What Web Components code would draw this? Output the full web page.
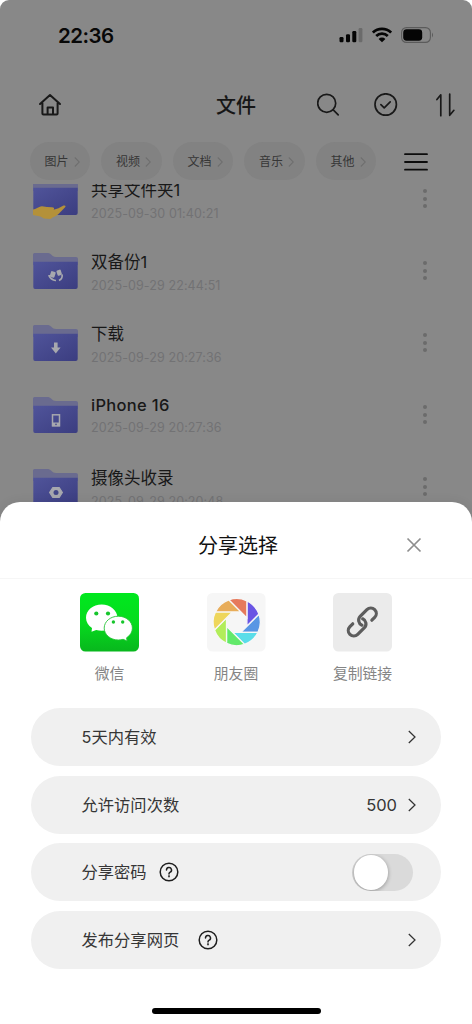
<!DOCTYPE html>
<html lang="zh-CN">
<head>
<meta charset="utf-8">
<meta name="viewport" content="width=device-width">
<title>文件</title>
<style>
body{margin:0;background:#fff;font-family:Inter,"Noto Sans CJK SC",sans-serif}
</style>
</head>
<body>
<share-screen></share-screen>
<script>
const define=(name,html)=>customElements.define(name,class extends HTMLElement{
  connectedCallback(){
    if(this.shadowRoot)return;
    const t=document.createElement('template');
    t.innerHTML=typeof html==='function'?html(this):html;
    this.attachShadow({mode:'open'}).append(t.content.cloneNode(true));
  }
});

define('status-bar',`<style>
:host{display:flex;justify-content:space-between;align-items:center;height:70px;padding:0 38.5px 0 58px;color:#080808}
b{font-size:20.5px;font-weight:600;line-height:24px;letter-spacing:-.5px;padding-top:1px}
.r{display:flex;align-items:center;gap:9px}
svg{display:block}
</style><b>22:36</b><div class="r">
<svg width="24" height="16" viewBox="0 0 24 16" fill="#050505"><rect x="0.5" y="10" width="4" height="5.2" rx="1.2"/><rect x="7" y="7.2" width="4" height="8" rx="1.2"/><rect x="13.3" y="4" width="4" height="11.2" rx="1.2"/><rect x="19.6" y="1" width="3.8" height="14.2" rx="1.2" fill="#6b6b6b"/></svg>
<svg width="20" height="16" viewBox="0 0 20 16" fill="none" stroke="#050505" stroke-width="2.7"><path d="M.9 5.6a13 13 0 0 1 18.2 0M4.2 9a8.3 8.3 0 0 1 11.6 0"/><path d="M10 15.2 6.6 11.9a4.9 4.9 0 0 1 6.8 0z" fill="#050505" stroke="none"/></svg>
<svg width="33" height="16" viewBox="0 0 33 16"><rect x=".6" y=".6" width="28.8" height="14.8" rx="4.8" fill="none" stroke="#5b5b5b" stroke-width="1.1"/><rect x="2.2" y="2.3" width="19" height="11.4" rx="3.4" fill="#050505"/><path d="M31 5.5q2 2.5 0 5z" fill="#5b5b5b"/></svg>
</div>`);

define('nav-bar',`<style>
:host{display:grid;grid-template-columns:1fr auto 1fr;align-items:center;height:70px;padding:0 38px 0 38px;color:#161616}
h1{margin:0;font-size:20px;font-weight:500;line-height:24px;padding-top:2px}
.a{display:flex;justify-content:flex-end;gap:34px;margin-right:-22px}
.a svg:first-child{margin-right:-1px}
svg{display:block;fill:none;stroke:#191919;stroke-width:1.7;stroke-linecap:round;stroke-linejoin:round;flex:none}
.h{stroke-width:2}
</style>
<svg class="h" width="24" height="24" viewBox="0 0 24 24"><path d="M2 11 12 2l10 9M4.4 9.8V20.6q0 1 1 1H18.6q1 0 1-1V9.8M9.6 21V14.5h5.4v6.5"/></svg>
<h1>文件</h1>
<div class="a">
<svg width="24" height="24" viewBox="0 0 24 24"><circle cx="9.7" cy="10.3" r="9"/><path d="m16.2 16.9 5 5"/></svg>
<svg width="24" height="24" viewBox="0 0 24 24"><circle cx="11.7" cy="11.5" r="10.7"/><path d="m6.9 11.7 3.3 3.200 6-6"/></svg>
<svg width="24" height="24" viewBox="0 0 24 24"><path d="M4.900 6.500 8.800 1.800V22.700M17.700 1V22.300l4.200-5"/></svg>
</div>`);

define('filter-chip',`<style>
:host{display:flex;align-items:center;gap:5px;box-sizing:border-box;width:60.5px;height:38px;padding:1px 0 0 15px;border-radius:19px;background:#828282;color:#363636;font-size:12px;line-height:17px}
svg{fill:none;stroke:#6f6f6f;stroke-width:1.1}
</style><span><slot></slot></span><svg width="6" height="10" viewBox="0 0 6 10"><path d="m.8.5 4.500 4.500-4.500 4.500"/></svg>`);

define('filter-bar',`<style>
:host{display:flex;align-items:center;padding:0 44px 0 29.500px;height:42px;justify-content:space-between;box-sizing:border-box}
.c{display:flex;gap:11px}
svg{display:block;margin-top:1px}
</style><div class="c"><filter-chip>图片</filter-chip><filter-chip>视频</filter-chip><filter-chip>文档</filter-chip><filter-chip>音乐</filter-chip><filter-chip>其他</filter-chip></div>
<svg width="24" height="20" viewBox="0 0 24 20" stroke="#0c0c0c" stroke-width="1.8" stroke-linecap="round"><path d="M1 2.200h22M1 10h22M1 17.700h22"/></svg>`);

const marks={
 share:'<path d="M0 28.500C3 28.500 5 25.800 9 25.300l5 .7 5 .3c2 0 2.800 1.400 1.500 2.500l5-1.600 5-2.600c2-.6 2.600.4 1.600 1.600L26.500 32c-2 2.400-4 3.200-6.500 4.200L17.500 38 11 37.500 7.500 35.500 0 34z" fill="#b4913a"/>',
 sync:'<g fill="none" stroke="#a7a8ae" stroke-width="1.700"><path d="M16 22q.300 3 4 4.800 1.500.8 3 .7M26 27.500q4-2 3-6"/></g><g fill="#a7a8ae"><rect x="17.500" y="18.500" width="4.800" height="6" rx="1" transform="rotate(18 20 21)"/><rect x="24" y="17" width="4.500" height="5.500" rx="1" transform="rotate(-18 26 20)"/></g>',
 down:'<path d="M21 17.500h3.600v5h3l-4.800 6-4.800-6h3z" fill="#a7a8ae"/>',
 phone:'<rect x="19.500" y="17.800" width="7" height="11" fill="none" stroke="#a7a8ae" stroke-width="1.500"/><path d="M19 25.500h8v3.800h-8z" fill="#a7a8ae"/><circle cx="23" cy="27.400" r=".8" fill="#44468b"/>',
 camera:'<path d="m19.800 18.500h6.400l3.200 5-3.200 5h-6.400l-3.200-5z" fill="#a7a8ae" stroke="#a7a8ae" stroke-width="1.200" stroke-linejoin="round"/><circle cx="23" cy="23.500" r="2.500" fill="#434787"/>'
};
define('folder-icon',e=>{
 const kind=e.getAttribute('kind'),lift=kind==='share'?-2:0;
 return `<style>:host{display:block;width:45px;height:37px}svg{display:block;overflow:visible}</style>
<svg width="45" height="37" viewBox="0 0 45 37"><defs><linearGradient id="g" x1="0" y1="0" x2="1" y2="1"><stop offset="0" stop-color="#50549a"/><stop offset="1" stop-color="#3b3d80"/></linearGradient></defs>
<g transform="translate(0 ${lift})"><path d="M0 12V1.500Q0 0 1.500 0H15c3 0 4 4 8 4h20q2 0 2 2V12z" fill="#6a6b8f"/><path d="M.300 8.800H44.700V34q0 2-2 2H2q-1.700 0-1.700-2z" fill="url(#g)"/></g>${marks[kind]}</svg>`;
});

define('file-row',e=>`<style>
:host{display:grid;grid-template-columns:45px 1fr 5px;column-gap:13px;height:72px;padding:0 44.500px 0 33px}
.t{display:flex;flex-direction:column;margin-top:-2px}
.n{font-size:16.500px;line-height:23px;color:#181818;white-space:nowrap}
:host([latin]) .n{line-height:21px;font-weight:500;font-size:16.500px;letter-spacing:.300px}
.d{font-size:12.500px;line-height:24px;color:#727274;letter-spacing:.1px;white-space:nowrap}
.m{display:flex;flex-direction:column;gap:3.500px;padding-top:8px}
.m i{width:4px;height:4px;border-radius:50%;background:#6b6b6b}
</style><folder-icon kind="${e.getAttribute('kind')}"></folder-icon>
<div class="t"><span class="n"><slot></slot></span><span class="d"><slot name="date"></slot></span></div><div class="m"><i></i><i></i><i></i></div>`);

define('files-view',`<style>
:host{display:flex;flex-direction:column;height:530px;background:#888;border-radius:9px 9px 0 0;overflow:hidden}
.l{flex:1;overflow:hidden;margin-top:2px}
.l file-row:first-child{margin-top:-3px}
</style><status-bar></status-bar><nav-bar></nav-bar><filter-bar></filter-bar>
<div class="l">
<file-row kind="share">共享文件夹1<span slot="date">2025-09-30 01:40:21</span></file-row>
<file-row kind="sync">双备份1<span slot="date">2025-09-29 22:44:51</span></file-row>
<file-row kind="down">下载<span slot="date">2025-09-29 20:27:36</span></file-row>
<file-row kind="phone" latin>iPhone 16<span slot="date">2025-09-29 20:27:36</span></file-row>
<file-row kind="camera">摄像头收录<span slot="date">2025-09-29 20:20:48</span></file-row>
</div>`);

const blades=['#6a55e4','#5896e4','#5adde9','#62e96a','#b2ed5a','#eed65c','#e8ad5a','#e67a5c'];
const logos={
 wechat:'<defs><linearGradient id="w" x2="0" y2="1"><stop stop-color="#00e81e"/><stop offset=".5" stop-color="#06dc1e"/><stop offset="1" stop-color="#08b71d"/></linearGradient></defs><rect width="59" height="58.500" rx="5.500" fill="url(#w)"/><path d="M21.700 11.500C13 11.500 6 17.400 6 24.800c0 4.200 2.300 7.900 6 10.300l-.500 3.700 4.700-1.800c1.700.5 3.600.8 5.500.8 8.700 0 15.800-5.800 15.800-13S30.400 11.500 21.700 11.500z" fill="#fff"/><path d="M38.300 23.200c-7.800 0-14.100 5.300-14.100 11.900S30.500 47 38.300 47c1.700 0 3.300-.3 4.800-.7l4 1.700-.5-3.200c3.500-2.200 5.800-5.700 5.800-9.700 0-6.600-6.300-11.900-14.100-11.900z" fill="#fff" stroke="#25c435" stroke-width=".9"/><g fill="#16c52b"><circle cx="16.300" cy="20.500" r="2.100"/><circle cx="28" cy="20.500" r="2.100"/><circle cx="33.400" cy="29" r="1.700"/><circle cx="42.700" cy="29" r="1.700"/></g>',
 moments:'<rect width="58.500" height="58.500" rx="5.500" fill="#f6f6f6"/><g transform="translate(29.700 29.100)" stroke="#f7f7f7" stroke-width="1.300">'+blades.map((c,i)=>`<path transform="rotate(${i*45})" d="M10.200-21.300A23.600 23.600 0 0 1 22.270-7.850L10.200 4.220Z" fill="${c}"/>`).join('')+'</g>',
 link:'<rect width="59" height="58.500" rx="5.500" fill="#ebebeb"/><g transform="translate(29.300 29) rotate(-45)" fill="none" stroke="#5d5d5d" stroke-width="3.200" stroke-linecap="round"><path d="M8 5.500H12a5.500 5.500 0 0 0 0-11H2.500A5.500 5.500 0 0 0-2.500 2"/><path transform="rotate(180)" d="M8 5.500H12a5.500 5.500 0 0 0 0-11H2.500A5.500 5.500 0 0 0-2.500 2"/></g>'
};
define('share-target',e=>`<style>
:host{display:flex;flex-direction:column;align-items:center;gap:11px;width:59px;color:#858585;font-size:14.800px;line-height:22px;white-space:nowrap}
svg{display:block}
</style><svg width="59" height="59" viewBox="0 0 59 59">${logos[e.getAttribute('kind')]}</svg><span><slot></slot></span>`);

define('chevron-right',`<style>:host{display:block}svg{display:block;fill:none;stroke:#333;stroke-width:1.250}</style><svg width="8" height="14" viewBox="0 0 8 14"><path d="m.8 1 6.200 6-6.200 6"/></svg>`);
define('help-mark',`<style>:host{display:block}svg{display:block;fill:none;stroke:#1e1e1e;stroke-width:1.500;stroke-linecap:round}</style><svg width="20" height="20" viewBox="0 0 20 20"><circle cx="10" cy="10" r="8.800"/><path d="M7.500 8a2.500 2.500 0 1 1 3.700 2.200c-.9.500-1.200.9-1.200 1.600v.1"/><circle cx="10" cy="14.300" r=".35"/></svg>`);
define('toggle-switch',`<style>
:host{display:flex;align-items:center;width:61px;height:37.500px;border-radius:19px;background:#dadada;box-sizing:border-box;padding-left:1.500px;overflow:hidden}
i{width:34.500px;height:34.500px;border-radius:50%;background:#fff;box-shadow:0 1px 4px #0005}
</style><i></i>`);
define('option-row',`<style>
:host{display:flex;align-items:center;height:58.300px;border-radius:29.200px;background:#f0f0f0;padding:0 25px 0 50.500px;color:#363636;font-size:16.300px;line-height:24px}
.s{flex:1}
.v{display:flex;align-items:center}
::slotted(help-mark){margin-left:12px}
::slotted(help-mark.far){margin-left:18.500px}
::slotted(toggle-switch){margin-right:3px}
::slotted(b){font-weight:400;font-size:16.500px;margin-right:11px}
</style><span><slot></slot></span><slot name="help"></slot><span class="s"></span><div class="v"><slot name="end"></slot></div>`);

define('share-sheet',`<style>
:host{display:flex;flex-direction:column;box-sizing:border-box;height:522px;margin-top:-28px;background:#fff;border-radius:20px 20px 0 0;position:relative;box-shadow:0 0 12px #0001}
header{display:grid;grid-template-columns:1fr auto 1fr;align-items:center;height:77px;padding:5px 50px 0 54px;border-bottom:1px solid #f6f6f6;box-sizing:border-box}
h2{grid-column:2;margin:0;font-size:20px;font-weight:400;line-height:26px;color:#111;padding-top:7px}
header svg{justify-self:end;fill:none;stroke:#8e8e8e;stroke-width:1.700;margin-top:4px}
.t{display:flex;justify-content:space-between;padding:13.500px 80px 0}
.o{display:flex;flex-direction:column;gap:9.300px;padding:23.500px 31px 0}
.h{width:169px;height:6px;border-radius:3px;background:#000;margin:auto auto 10px}
</style>
<header><h2>分享选择</h2><svg width="16" height="16" viewBox="0 0 16 16"><path d="m1.500 1.500 13 13m0-13-13 13"/></svg></header>
<div class="t"><share-target kind="wechat">微信</share-target><share-target kind="moments">朋友圈</share-target><share-target kind="link">复制链接</share-target></div>
<div class="o">
<option-row>5天内有效<chevron-right slot="end"></chevron-right></option-row>
<option-row>允许访问次数<b slot="end">500</b><chevron-right slot="end"></chevron-right></option-row>
<option-row>分享密码<help-mark slot="help"></help-mark><toggle-switch slot="end"></toggle-switch></option-row>
<option-row>发布分享网页<help-mark slot="help" class="far"></help-mark><chevron-right slot="end"></chevron-right></option-row>
</div><div class="h"></div>`);

define('share-screen',`<style>:host{display:flex;flex-direction:column;width:472px;height:1024px;overflow:hidden;background:#fff}files-view,share-sheet{flex:none}</style><files-view></files-view><share-sheet></share-sheet>`);
</script>
</body>
</html>
